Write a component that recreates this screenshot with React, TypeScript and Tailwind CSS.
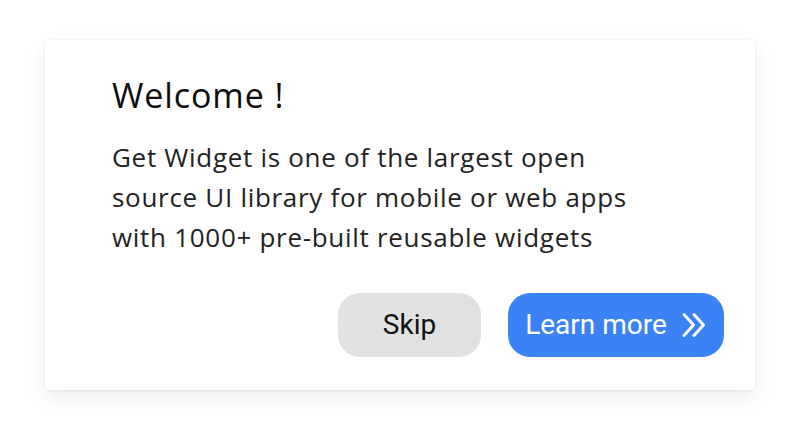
import React from "react";

export default function App() {
  return (
    <div className="w-[800px] h-[438px] bg-white pt-[40px] pl-[45px]">
      <div className="w-[710px] h-[350px] bg-white rounded-[4px] shadow-[0_0_3px_rgba(0,0,0,0.08),0_8px_22px_rgba(0,0,0,0.08)] flex flex-col pl-[67px] pr-[31px] pt-[35px]">
        <h1
          className="text-[34px] leading-[40px] text-[#0d0d0d] font-medium tracking-[0.9px]"
          style={{ fontFamily: "'Open Sans', sans-serif" }}
        >
          Welcome !
        </h1>
        <p
          className="mt-[22px] text-[26px] leading-[40px] text-[#222] whitespace-nowrap tracking-[0.7px]"
          style={{ fontFamily: "'Open Sans', sans-serif" }}
        >
          Get Widget is one of the largest open
          <br />
          source UI library for mobile or web apps
          <br />
          with 1000+ pre-built reusable widgets
        </p>
        <div
          className="mt-auto mb-[33px] flex justify-end gap-[27px]"
          style={{ fontFamily: "Roboto, sans-serif" }}
        >
          <button className="w-[143px] h-[64px] rounded-[22px] bg-[#e1e1e1] text-[28px] text-[#111] flex items-center justify-center">
            Skip
          </button>
          <button className="w-[216px] h-[64px] rounded-[22px] bg-[#3b82f6] text-[28px] text-white flex items-center justify-center gap-[14px]">
            <span>Learn more</span>
            <svg width="26" height="26" viewBox="0 0 26 26" fill="none" stroke="white" strokeWidth="3" strokeLinecap="round" strokeLinejoin="round">
              <path d="M3 2.5l9.5 10.5-9.5 10.5" />
              <path d="M13 2.5l9.5 10.5-9.5 10.5" />
            </svg>
          </button>
        </div>
      </div>
    </div>
  );
}
